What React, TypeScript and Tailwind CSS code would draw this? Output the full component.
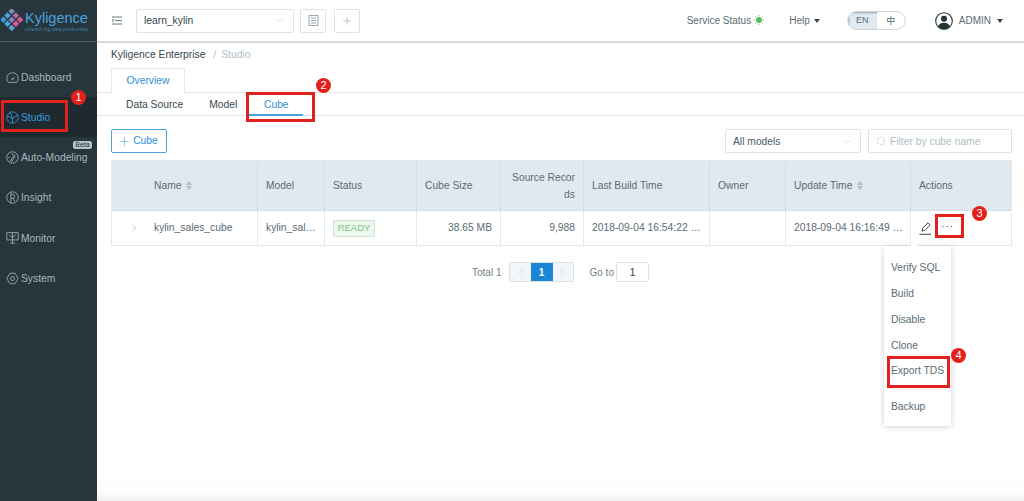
import { ChevronDown, ChevronRight, ChevronLeft, Plus, Search } from 'lucide-react'

// ── Sidebar icons ─────────────────────────────────────────────

function Logo() {
  const cells: [number, number, string][] = [
    [9, 1, '#7d8fb5'], [5, 5, '#4f9fd8'], [13, 5, '#b06fb0'], [1, 9, '#3f9bdc'], [9, 9, '#8f7fc0'],
    [17, 9, '#e0569b'], [5, 13, '#4aa3df'], [13, 13, '#d85aa0'], [9, 17, '#5aa5d8'],
  ]
  return (
    <svg width="23" height="23" viewBox="0 0 22 22">
      {cells.map(([x, y, c], i) => (
        <rect key={i} x={x - 1} y={y - 1} width="4.4" height="4.4" fill={c} transform={`rotate(45 ${x + 1.2} ${y + 1.2})`} />
      ))}
    </svg>
  )
}

function NavIcon({ name }: { name: string }) {
  return (
    <svg width="13" height="13" viewBox="0 0 16 16" className="fill-none stroke-current shrink-0" strokeWidth="1">
      {name === 'Dashboard' && (
        <>
          <path d="M3 14A7 7 0 1 1 13 14Z" />
          <path d="M8 10l2.500-2.500" />
          <circle cx="8" cy="10" r="0.8" />
        </>
      )}
      {name === 'Studio' && (
        <>
          <circle cx="8" cy="8" r="7" />
          <path d="M1.500 6l6.500 3 6.500-4M8 9v6M5 1.500l3 7.500" />
        </>
      )}
      {name === 'Auto-Modeling' && (
        <>
          <circle cx="8" cy="8" r="7" />
          <path d="M5 13l5-8 1.200 1-4.200 7.500M3 8h2M8 3v2" />
        </>
      )}
      {name === 'Insight' && (
        <>
          <circle cx="8" cy="8" r="7" />
          <path d="M6 1.500v13M6 4.500h2.500a2.200 2.200 0 0 1 0 4.500H6M8.500 9l2.500 3.500" />
        </>
      )}
      {name === 'Monitor' && <path d="M1 2h14v9H1zM8 2v13M5 15h6M4 5l4 3 4-3" />}
      {name === 'System' && (
        <>
          <path d="M5 1.500h6L15 8l-4 6.500H5L1 8Z" />
          <circle cx="8" cy="8" r="2.500" />
        </>
      )}
    </svg>
  )
}

const NAV = ['Dashboard', 'Studio', 'Auto-Modeling', 'Insight', 'Monitor', 'System']

function Sidebar() {
  return (
    <aside className="w-[97px] shrink-0 bg-[#27353c] text-[#aab7bd]">
      <div className="h-[42px] border-b border-[#4b5a61] flex items-center pl-[1px] gap-[1px]">
        <Logo />
        <div className="leading-none">
          <div className="text-[14.5px] text-[#4aa3df] leading-[16px]">Kyligence</div>
          <div className="text-[5px] text-[#3f7fa8] whitespace-nowrap leading-[6px]">unleash big data productivity</div>
        </div>
      </div>
      <nav className="pt-[15px]">
        {NAV.map((n) => (
          <div
            key={n}
            className={`relative h-[40.2px] flex items-center pl-[6px] gap-[2px] text-[10.3px] ${
              n === 'Studio' ? 'bg-[#1e2a30] text-[#3f9bdc]' : ''
            }`}
          >
            <NavIcon name={n} />
            <span className="whitespace-nowrap pt-[1px]">{n}</span>
            {n === 'Auto-Modeling' && (
              <span className="absolute left-[73px] top-[4px] w-[19px] h-[8px] rounded-[2px] bg-[#b8c2c7] text-[#263238] text-[7px] leading-[8px] text-center">
                Beta
              </span>
            )}
          </div>
        ))}
      </nav>
    </aside>
  )
}

// ── Header ────────────────────────────────────────────────────

function Caret({ className }: { className: string }) {
  return <span className={`w-0 h-0 border-x-[3px] border-x-transparent border-t-[4px] border-t-[#37474f] ${className}`} />
}

function Header() {
  return (
    <header className="h-[43px] shrink-0 bg-white border-b-2 border-[#d5d8da] flex items-center text-[10.3px] text-[#5a6b74]">
      <svg width="12" height="10" viewBox="0 0 12 10" className="ml-[14px] stroke-[#5b6b73] fill-none" strokeWidth="0.9">
        <path d="M1 1h10M4 4.500h7M1 8h10M3 3L1 4.500 3 6" />
      </svg>
      <div className="ml-[13px] w-[158px] h-[24px] border border-[#dce3e8] rounded-[2px] flex items-center justify-between pl-[7px] pr-[8px] text-[#37474f]">
        <span>learn_kylin</span>
        <ChevronDown size={11} strokeWidth={1} className="text-[#b0bec5]" />
      </div>
      <div className="ml-[6px] w-[26px] h-[24px] border border-[#dce3e8] rounded-[2px] flex items-center justify-center">
        <svg width="11" height="11" viewBox="0 0 11 11" className="stroke-[#78909c] fill-none" strokeWidth="0.8">
          <path d="M1 .5h9v10H1zM3 3h5M3 5.500h5M3 8h5" />
        </svg>
      </div>
      <div className="ml-[8px] w-[26px] h-[24px] border border-[#dce3e8] rounded-[2px] flex items-center justify-center">
        <Plus size={12} strokeWidth={1} className="text-[#78909c]" />
      </div>
      <div className="ml-auto flex items-center text-[10px]">
        <span>Service Status</span>
        <svg width="10" height="10" viewBox="0 0 10 10" className="ml-[3px] -mt-[2px] stroke-[#5cb85c]" strokeWidth="0.8">
          <circle cx="5" cy="5" r="2.600" fill="#5cb85c" />
          <path d="M5 0v1.500M5 8.500V10M0 5h1.500M8.500 5H10M1.500 1.500l1 1M7.500 7.500l1 1M8.500 1.500l-1 1M2.500 7.500l-1 1" />
        </svg>
        <span className="ml-[25px]">Help</span>
        <Caret className="ml-[4px]" />
        <div className="ml-[27px] w-[59px] h-[19px] rounded-full border border-[#cfd8dc] flex overflow-hidden text-[9px]">
          <span className="w-[29px] bg-[#e1e9f0] flex items-center justify-center shadow-[inset_1px_1px_2px_#90a4ae]">EN</span>
          <span className="flex-1 flex items-center justify-center font-['Noto_Sans_CJK_SC',sans-serif]">中</span>
        </div>
        <svg width="18" height="18" viewBox="0 0 18 18" className="ml-[29px]">
          <circle cx="9" cy="9" r="8.300" fill="#fff" stroke="#263238" strokeWidth="1.100" />
          <circle cx="9" cy="6.800" r="3" fill="#263238" />
          <path d="M3 14.500c1-3 3.500-3.800 6-3.800s5 .8 6 3.800A8 8 0 0 1 3 14.500Z" fill="#263238" />
        </svg>
        <span className="ml-[6px]">ADMIN</span>
        <Caret className="ml-[6px] mr-[21px]" />
      </div>
    </header>
  )
}

// ── Table ─────────────────────────────────────────────────────

function Sort() {
  return (
    <span className="ml-[5px] inline-flex flex-col gap-[1px]">
      <span className="w-0 h-0 border-x-[3.5px] border-x-transparent border-b-[4px] border-b-[#b0bec5]" />
      <span className="w-0 h-0 border-x-[3.5px] border-x-transparent border-t-[4px] border-t-[#b0bec5]" />
    </span>
  )
}

const GRID = 'grid grid-cols-[146px_67px_92px_84px_83px_126px_76px_125px_1fr]'

function CubeTable() {
  const hd = 'flex items-center px-[8px] border-r border-[#d5dde3] last:border-r-0'
  const td = 'flex items-center px-[8px] border-r border-[#e3e8ec] last:border-r-0 whitespace-nowrap'
  return (
    <div className="mr-[12px] ml-[14px] mt-[7px] border border-[#e3e8ec] text-[10.3px]">
      <div className={`${GRID} h-[50px] bg-[#e1e9f0] text-[#5a6b74] border-b border-[#d5dde3]`}>
        <div className={`${hd} pl-[42px]`}>Name<Sort /></div>
        <div className={hd}>Model</div>
        <div className={hd}>Status</div>
        <div className={hd}>Cube Size</div>
        <div className={`${hd} justify-end text-right leading-[17px] pl-[4px] whitespace-nowrap`}>
          <span>Source Recor<br />ds</span>
        </div>
        <div className={hd}>Last Build Time</div>
        <div className={hd}>Owner</div>
        <div className={hd}>Update Time<Sort /></div>
        <div className={hd}>Actions</div>
      </div>
      <div className={`${GRID} h-[34px] bg-white text-[#5a6b74]`}>
        <div className={`${td} pl-[16px]`}>
          <ChevronRight size={12} strokeWidth={1} className="text-[#78909c] mr-[14px]" />
          kylin_sales_cube
        </div>
        <div className={td}>kylin_sal…</div>
        <div className={td}>
          <span className="w-[42px] h-[17px] border border-[#cde6cf] bg-[#eef7ee] text-[#7cc47f] text-[9.5px] flex items-center justify-center rounded-[1px]">READY</span>
        </div>
        <div className={`${td} justify-end`}>38.65 MB</div>
        <div className={`${td} justify-end`}>9,988</div>
        <div className={td}>2018-09-04 16:54:22 …</div>
        <div className={td} />
        <div className={td}>2018-09-04 16:16:49 …</div>
        <div className={td}>
          <svg width="13" height="13" viewBox="0 0 13 13" className="fill-none stroke-[#263238] shrink-0" strokeWidth="0.9">
            <path d="M3 9l.6-2.800L9 .8l2.200 2.200L5.800 8.400ZM.5 12.300h11.500" />
          </svg>
          <span className="ml-[9px] tracking-[1px] text-[#37474f] -mt-[3px]">···</span>
        </div>
      </div>
    </div>
  )
}

function Pagination() {
  return (
    <div className="mt-[16px] flex items-center justify-center text-[10px] text-[#6f7f87]">
      <span>Total 1</span>
      <div className="ml-[7px] h-[20px] flex border border-[#dce3e8] rounded-[2px] overflow-hidden">
        <span className="w-[21px] bg-[#f3f6f8] flex items-center justify-center">
          <ChevronLeft size={11} strokeWidth={1} className="text-[#b0bec5]" />
        </span>
        <span className="w-[22px] bg-[#1a86d6] text-white font-bold flex items-center justify-center">1</span>
        <span className="w-[20px] bg-[#f3f6f8] flex items-center justify-center">
          <ChevronRight size={11} strokeWidth={1} className="text-[#b0bec5]" />
        </span>
      </div>
      <span className="ml-[16px]">Go to</span>
      <span className="ml-[2px] w-[33px] h-[20px] border border-[#dce3e8] rounded-[2px] flex items-center justify-center text-[#37474f] text-[11px]">1</span>
    </div>
  )
}

// ── Annotations ───────────────────────────────────────────────

function Badge({ n, className }: { n: number; className: string }) {
  return (
    <span className={`absolute w-[15px] h-[15px] rounded-full bg-[#e3211c] text-white text-[11px] leading-[15px] text-center ${className}`}>
      {n}
    </span>
  )
}

function Box({ className }: { className: string }) {
  return <span className={`absolute border-[3px] border-[#e3211c] ${className}`} />
}

const MENU = ['Verify SQL', 'Build', 'Disable', 'Clone', 'Export TDS']

export default function App() {
  return (
    <div className="relative w-[1024px] h-[501px] overflow-hidden flex bg-white font-['Liberation_Sans',Arial,sans-serif]">
      <Sidebar />
      <main className="flex-1 min-w-0 flex flex-col">
        <Header />
        <div className="pl-[14px] pt-[5px] text-[10.3px] text-[#37474f] leading-[14px]">
          Kyligence Enterprise <span className="text-[#b0bec5] ml-[5px]">/</span><span className="text-[#b0bec5] ml-[5px]">Studio</span>
        </div>
        <div className="mt-[6px] h-[25px] border-b border-[#e3e8ec] pl-[14px]">
          <div className="w-[74px] h-[25px] bg-white border border-b-0 border-[#e3e8ec] rounded-t-[2px] flex items-center justify-center text-[10.3px] text-[#2f8fd8]">
            Overview
          </div>
        </div>
        <div className="h-[23px] border-b border-[#e3e8ec] flex pl-[29px] text-[10.3px] font-medium text-[#37474f]">
          <span className="leading-[23px]">Data Source</span>
          <span className="ml-[26px] leading-[23px]">Model</span>
          <span className="ml-[12px] w-[54px] h-[23px] -mb-px leading-[23px] text-center text-[#2f8fd8] border-b-2 border-[#4aa3df]">Cube</span>
        </div>
        <div className="flex items-center mt-[13px] pl-[14px] pr-[12px]">
          <div className="w-[56px] h-[24px] border border-[#4aa3df] rounded-[2px] flex items-center justify-center gap-[2px] pr-[2px] text-[10.3px] text-[#2f8fd8]">
            <Plus size={13} strokeWidth={1} />
            Cube
          </div>
          <div className="ml-auto w-[136px] h-[24px] border border-[#dce3e8] rounded-[2px] flex items-center justify-between px-[7px] text-[10.3px] text-[#455a64]">
            <span className="pt-[1px]">All models</span>
            <ChevronDown size={11} strokeWidth={1} className="text-[#b0bec5]" />
          </div>
          <div className="ml-[7px] w-[144px] h-[24px] border border-[#dce3e8] rounded-[2px] flex items-center px-[7px] gap-[3px] text-[10.3px] text-[#b0bec5]">
            <Search size={11} strokeWidth={1} />
            <span className="pt-[1px]">Filter by cube name</span>
          </div>
        </div>
        <CubeTable />
        <Pagination />
        <div className="mt-auto h-[22px] bg-[linear-gradient(to_bottom,#ffffff,#fcfcfc_65%,#f0f0f0)]" />
      </main>

      {/* Dropdown over the table */}
      <div className="absolute left-[884px] top-[246px] w-[67px] h-[180px] bg-white shadow-[0_1px_6px_rgba(0,0,0,0.18)] pt-[9px] text-[10.3px] text-[#5a6b74]">
        <span className="absolute -top-[3px] left-[27px] w-[6px] h-[6px] bg-white rotate-45" />
        {MENU.map((m) => (
          <div key={m} className="h-[25.8px] flex items-center pl-[7px]">{m}</div>
        ))}
        <div className="h-[25.8px] mt-[10px] flex items-center pl-[7px]">Backup</div>
      </div>

      {/* Tutorial annotations */}
      <Box className="left-[1px] top-[100px] w-[67px] h-[32px]" />
      <Box className="left-[246px] top-[92px] w-[69px] h-[30px]" />
      <Box className="left-[935px] top-[214px] w-[29px] h-[24px]" />
      <Box className="left-[887px] top-[356px] w-[63px] h-[32px]" />
      <Badge n={1} className="left-[71px] top-[90px]" />
      <Badge n={2} className="left-[316px] top-[78px]" />
      <Badge n={3} className="left-[972px] top-[206px]" />
      <Badge n={4} className="left-[951px] top-[348px]" />
    </div>
  )
}
